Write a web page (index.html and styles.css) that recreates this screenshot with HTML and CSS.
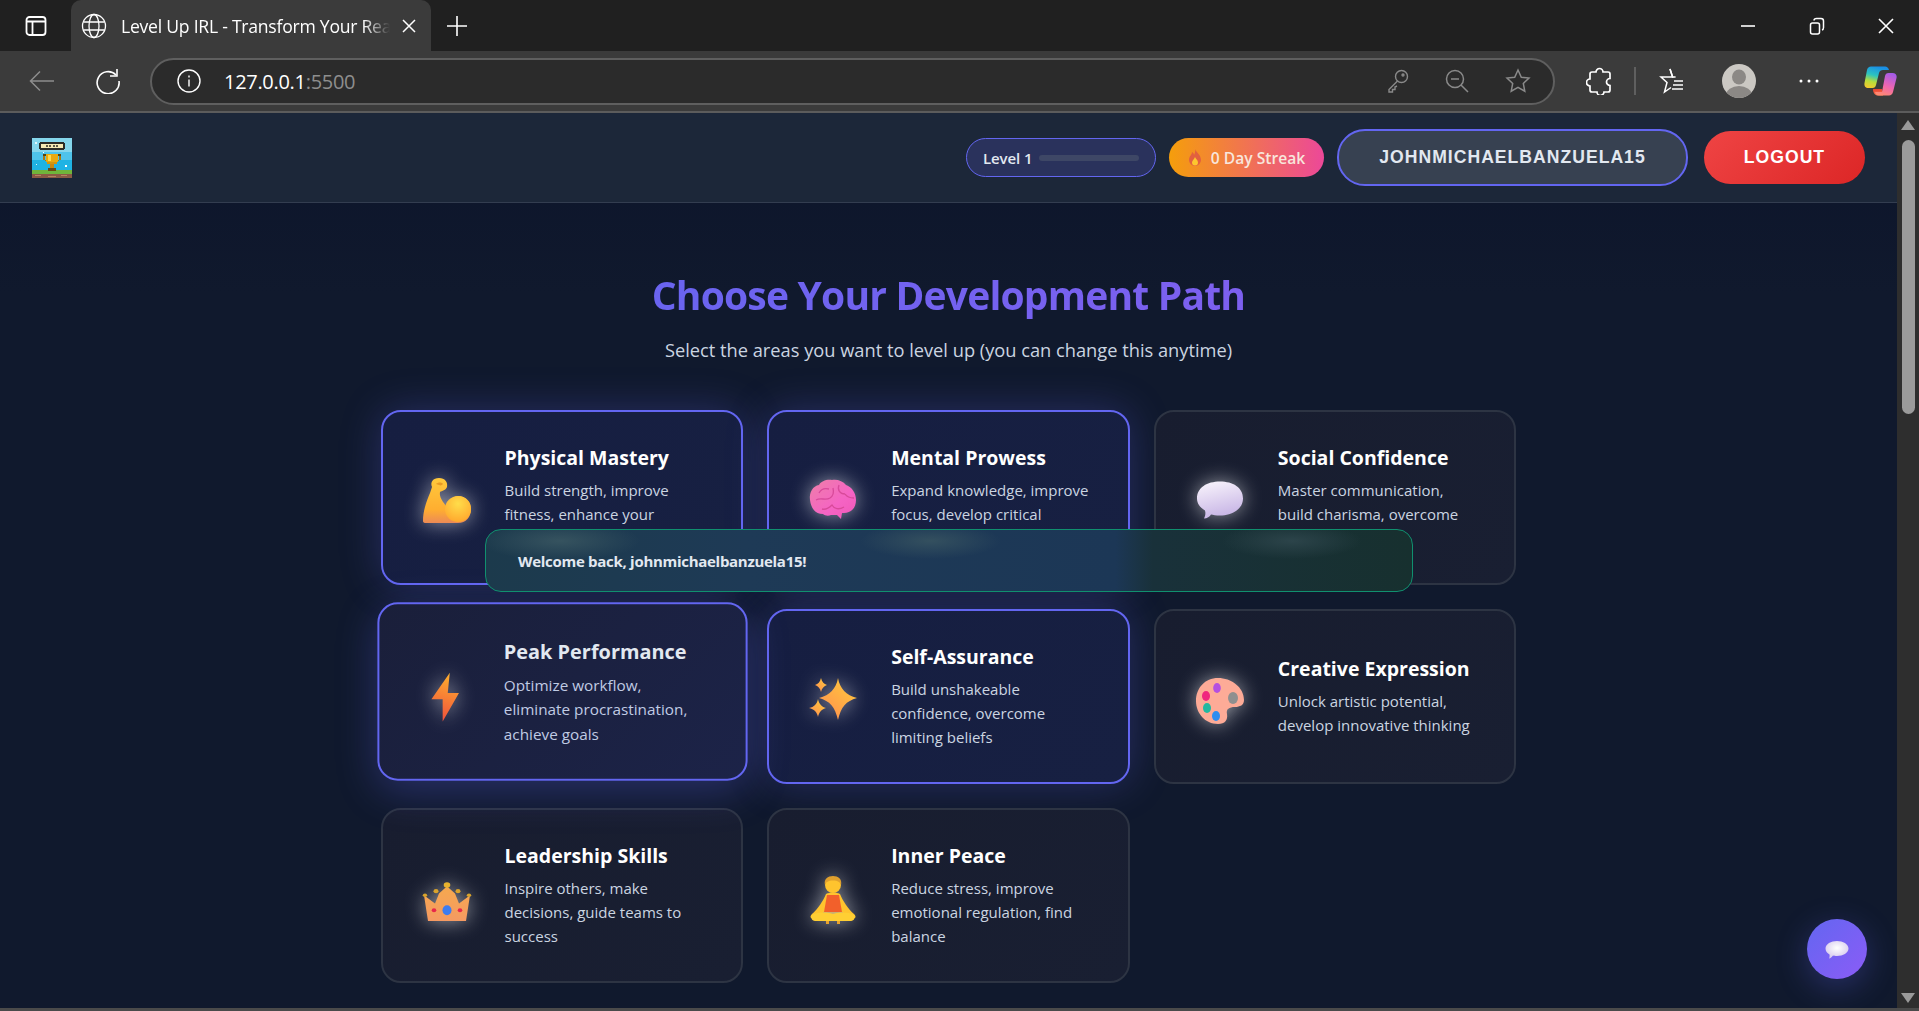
FILE: index.html
```html
<!DOCTYPE html>
<html lang="en">
<head>
  <meta charset="UTF-8">
  <meta name="viewport" content="width=device-width, initial-scale=1.0">
  <title>Level Up IRL - Transform Your Reality</title>
  <link rel="stylesheet" href="styles.css">
</head>
<body>
  <!-- browser frame -->
  <div class="tabstrip">
    <div class="tab-toggle">
      <svg width="22" height="22" viewBox="0 0 22 22" fill="none" stroke="#fff" stroke-width="1.8"><rect x="1.500" y="2" width="19" height="18" rx="3"/><path d="M1.500 6.500h19M7.500 6.500V20"/></svg>
    </div>
    <div class="tab">
      <svg class="tab-globe" width="26" height="26" viewBox="0 0 26 26" fill="none" stroke="#fff" stroke-width="1.3"><circle cx="13" cy="13" r="11.500"/><ellipse cx="13" cy="13" rx="5" ry="11.500"/><path d="M2.500 9h21M2.500 17h21"/></svg>
      <span class="tab-title">Level Up IRL - Transform Your Rea</span>
      <svg class="tab-close" width="14" height="14" viewBox="0 0 14 14" stroke="#fff" stroke-width="1.5"><path d="M1 1l12 12M13 1L1 13"/></svg>
    </div>
    <svg class="tab-new" width="22" height="22" viewBox="0 0 22 22" stroke="#fff" stroke-width="1.6"><path d="M11 1v20M1 11h20"/></svg>
    <div class="window-btns">
      <svg width="16" height="16" viewBox="0 0 16 16" stroke="#fff" stroke-width="1.6"><path d="M1 8h14"/></svg>
      <svg width="16" height="18" viewBox="0 0 16 18" fill="none" stroke="#fff" stroke-width="1.5"><rect x="1.500" y="6" width="9" height="11" rx="2"/><path d="M5 3.500Q5 1.500 7.500 1.500H12Q14.500 1.500 14.500 4V10.500Q14.500 12.500 13 13"/></svg>
      <svg width="16" height="16" viewBox="0 0 16 16" stroke="#fff" stroke-width="1.6"><path d="M1 1l14 14M15 1L1 15"/></svg>
    </div>
  </div>
  <div class="toolbar">
    <svg class="nav-back" width="26" height="22" viewBox="0 0 26 22" fill="none" stroke="#8d8d8d" stroke-width="1.5"><path d="M25 11H2M11 1.500L1.500 11 11 20.500"/></svg>
    <svg class="nav-reload" width="26" height="26" viewBox="0 0 26 26" fill="none" stroke="#fff" stroke-width="1.6"><path d="M21 7A11 11 0 1 0 24 13"/><path d="M22 1v7h-7"/></svg>
    <div class="address">
      <svg width="24" height="24" viewBox="0 0 24 24" fill="none" stroke="#fff" stroke-width="1.4"><circle cx="12" cy="12" r="11"/><path d="M12 10.500v7M12 6.500v2"/></svg>
      <div class="url">127.0.0.1<span>:5500</span></div>
      <div class="address-icons">
        <svg width="22" height="24" viewBox="0 0 22 24" fill="none" stroke="#8a8a8a" stroke-width="1.4"><circle cx="14.500" cy="7.500" r="6"/><path d="M10.500 12L2 20.500V23h3.500v-2.500H8V18l2-1"/><circle cx="16" cy="6" r="1"/></svg>
        <svg width="24" height="24" viewBox="0 0 24 24" fill="none" stroke="#8a8a8a" stroke-width="1.5"><circle cx="10" cy="10" r="8.500"/><path d="M6 10h8M16 16l7 7"/></svg>
        <svg width="26" height="26" viewBox="0 0 26 26" fill="none" stroke="#8a8a8a" stroke-width="1.5"><path d="M13 2l3.300 7.200 7.700.9-5.700 5.300 1.500 7.800-6.800-3.900-6.800 3.900 1.500-7.800L2 10.100l7.700-.9z"/></svg>
      </div>
    </div>
    <svg class="tool-ext" width="26" height="28" viewBox="0 0 26 28" fill="none" stroke="#fff" stroke-width="1.7"><path d="M10 5a3.500 3.500 0 1 1 7 0h5a2 2 0 0 1 2 2v4.500a3.500 3.500 0 1 0 0 7V23a2 2 0 0 1-2 2h-4a3.500 3.500 0 1 1-7 0H6a2 2 0 0 1-2-2v-4a3.500 3.500 0 1 1 0-7V7a2 2 0 0 1 2-2z"/></svg>
    <div class="tool-sep"></div>
    <svg class="tool-fav" width="26" height="28" viewBox="0 0 26 28" fill="none" stroke="#fff" stroke-width="1.500"><path d="M11 2l2.600 8H2l6 5.500L5.500 25l6.500-4.500"/><path d="M11 2l2.600 8h3M15 14h9M14 18h10M13 22h11"/></svg>
    <svg class="tool-avatar" width="34" height="34" viewBox="0 0 34 34"><clipPath id="av"><circle cx="17" cy="17" r="17"/></clipPath><g clip-path="url(#av)"><rect width="34" height="34" fill="#cbc8c3"/><ellipse cx="17" cy="13" rx="7" ry="7.500" fill="#8b8885"/><ellipse cx="17" cy="31" rx="13" ry="9" fill="#8b8885"/></g></svg>
    <svg class="tool-more" width="20" height="4" viewBox="0 0 20 4" fill="#fff"><circle cx="2" cy="2" r="1.500"/><circle cx="10" cy="2" r="1.500"/><circle cx="18" cy="2" r="1.500"/></svg>
    <svg class="tool-copilot" width="33" height="30" viewBox="0 0 33 30">
      <defs>
        <linearGradient id="cpA" x1="0.500" y1="0" x2="0.200" y2="1"><stop offset="0" stop-color="#1a8fe6"/><stop offset=".4" stop-color="#2cc4c0"/><stop offset=".7" stop-color="#b8dc3a"/><stop offset="1" stop-color="#f5c92e"/></linearGradient>
        <linearGradient id="cpB" x1="0.700" y1="0" x2="0.300" y2="1"><stop offset="0" stop-color="#a45be8"/><stop offset=".55" stop-color="#ee66b0"/><stop offset="1" stop-color="#ff8a70"/></linearGradient>
        <linearGradient id="cpC" x1="0" y1="0" x2="0" y2="1"><stop offset="0" stop-color="#e83f2e"/><stop offset="1" stop-color="#ff7a55"/></linearGradient>
      </defs>
      <path d="M7 .5C5 .5 3.500 2 3 4L.5 17c-.5 3 1 5 4 5h4c2 0 3-1 3.500-3L15 7c.5-2 2-3 4-3h6c-.5-2-2-3.500-4-3.500z" fill="url(#cpA)"/>
      <path d="M9 23c0 4 2 6.500 5 6.500h5l-1-6.500z" fill="url(#cpC)"/>
      <path d="M18 26H11c.5 2 2 3.500 4 3.500h10c2 0 3.500-1.500 4-3.500l3.500-14c.7-3-1-5-4-5h-4c-2 0-3 1-3.500 3z" fill="url(#cpB)"/>
    </svg>
  </div>

  <div class="viewport">
    <div class="page">
      <header class="topbar">
        <svg class="logo" width="40" height="40" viewBox="0 0 40 40" shape-rendering="crispEdges">
          <rect width="40" height="14" fill="#85d6ec"/>
          <rect y="14" width="40" height="8" fill="#4fc3ea"/>
          <rect y="22" width="40" height="10" fill="#1fb3e4"/>
          <rect y="32" width="40" height="4" fill="#6fb53b"/>
          <rect y="36" width="40" height="4" fill="#8a5a44"/>
          <rect y="37" x="3" width="6" height="1" fill="#b5835f"/><rect y="38" x="16" width="8" height="1" fill="#b5835f"/><rect y="37" x="29" width="6" height="1" fill="#b5835f"/>
          <rect x="8" y="4" width="24" height="8" fill="#2b2b26"/>
          <rect x="7" y="5" width="26" height="6" fill="#2b2b26"/>
          <rect x="9" y="6" width="22" height="4" fill="#f5e9b4"/>
          <rect x="14" y="7" width="2" height="2" fill="#5f5a48"/><rect x="17" y="7" width="2" height="2" fill="#5f5a48"/><rect x="21" y="7" width="2" height="2" fill="#5f5a48"/><rect x="24" y="7" width="2" height="2" fill="#5f5a48"/>
          <rect x="11" y="16" width="18" height="2" fill="#5a4410"/>
          <rect x="11" y="18" width="2" height="4" fill="#a87a10"/><rect x="27" y="18" width="2" height="4" fill="#a87a10"/>
          <rect x="13" y="22" width="2" height="1" fill="#a87a10"/><rect x="25" y="22" width="2" height="1" fill="#a87a10"/>
          <rect x="14" y="16" width="12" height="8" fill="#e8a90f"/>
          <rect x="15" y="24" width="10" height="2" fill="#d19510"/>
          <rect x="16" y="17" width="3" height="6" fill="#ffd84a"/>
          <rect x="18" y="26" width="4" height="4" fill="#c8880f"/>
          <rect x="16" y="30" width="8" height="3" fill="#6b4a14"/>
          <rect x="33" y="27" width="2" height="2" fill="#fff"/><rect x="3" y="4" width="2" height="2" fill="#dff5fb"/><rect x="11" y="14" width="1" height="1" fill="#fff"/><rect x="4" y="26" width="1" height="1" fill="#dff5fb"/>
        </svg>
        <div class="topbar-right">
          <div class="level-pill">
            <span>Level 1</span>
            <div class="level-track"></div>
          </div>
          <div class="streak-pill">
            <svg width="14" height="18" viewBox="0 0 14 18"><path d="M7 0c1 3 6 6 6 11a6 6 0 0 1-12 0C1 7 4 6 4 3c1 .5 2 1.500 2 3 1-1.500 1.500-4 1-6z" fill="#e2603f"/><path d="M7 8c.5 1.500 3 3 3 5.500a3 3 0 0 1-6 0C4 11.500 6 10.500 7 8z" fill="#fdc72e"/></svg>
            <span>0 Day Streak</span>
          </div>
          <button class="user-btn">JOHNMICHAELBANZUELA15</button>
          <button class="logout-btn">LOGOUT</button>
        </div>
      </header>

      <main class="paths">
        <h1 class="paths-title">Choose Your Development Path</h1>
        <p class="paths-sub">Select the areas you want to level up (you can change this anytime)</p>

        <div class="path-grid">
          <div class="path-card selected">
            <div class="path-icon">
              <svg width="48" height="48" viewBox="0 0 48 48">
                <defs><linearGradient id="g1" x1="0" y1="0" x2="0" y2="1"><stop offset="0" stop-color="#ffc93c"/><stop offset=".7" stop-color="#ffae30"/><stop offset="1" stop-color="#ec8a56"/></linearGradient>
                <radialGradient id="g1b" cx=".5" cy=".3" r=".7"><stop offset="0" stop-color="#ffdd4a"/><stop offset="1" stop-color="#ffa92e"/></radialGradient></defs>
                <path d="M0 43C0 34 3 24 7 15L9 9C7 4 10 0 16 0c6 0 9 4 8 9-1 3-5 4-7 5-1 5 3 10 7 15 3-7 7-11 11-11 8 0 13 6 13 13 0 8-5 14-13 14H3c-2 0-3-.500-3-2z" fill="url(#g1)"/>
                <circle cx="35" cy="31" r="13" fill="url(#g1b)"/>
                <path d="M13 6c2-2 6-2 7 0-1 1-2 2-4 1z" fill="#e89a25"/>
              </svg>
            </div>
            <div class="path-text">
              <h3>Physical Mastery</h3>
              <p>Build strength, improve<br>fitness, enhance your<br>overall health</p>
            </div>
          </div>

          <div class="path-card selected">
            <div class="path-icon">
              <svg width="48" height="48" viewBox="0 0 48 48">
                <defs><linearGradient id="g2" x1="0" y1="0" x2="1" y2="1"><stop offset="0" stop-color="#ee7fa8"/><stop offset=".6" stop-color="#f564c4"/><stop offset="1" stop-color="#f058b8"/></linearGradient></defs>
                <path d="M1 22C0 14 4 8 10 7c2-4 8-6 13-5 5-1 11 1 14 5 6 2 10 8 10 15 0 8-5 13-12 13h-2l-1 6-4-4H22c-2 1-6 1-8-1C6 36 2 30 1 22z" fill="url(#g2)"/>
                <path d="M7 22c5-3 9 1 14-2 3-2 4-6 3-10M30 7c-2 5 1 9 6 9M13 31c4 1 7-1 10-4 2 4 7 5 12 2M36 16c2 3 5 4 9 4M20 11c-4-1-8 0-10 4" fill="none" stroke="#d84a9a" stroke-width="1.300"/>
              </svg>
            </div>
            <div class="path-text">
              <h3>Mental Prowess</h3>
              <p>Expand knowledge, improve<br>focus, develop critical<br>thinking skills</p>
            </div>
          </div>

          <div class="path-card">
            <div class="path-icon">
              <svg width="48" height="48" viewBox="0 0 48 48">
                <defs><linearGradient id="g3" x1="0" y1="0" x2="0.300" y2="1"><stop offset="0" stop-color="#fbf7fd"/><stop offset="1" stop-color="#c9b7e6"/></linearGradient></defs>
                <path d="M24 3.500C37 3.500 47 9.500 47 20.500c0 10-10 17-23 17-4 0-7-.500-9-1-1 2-4 4-7 4 1-2 2-5 1-8C4 29.500 1 25.500 1 20.500 1 9.500 11 3.500 24 3.500z" fill="url(#g3)"/>
              </svg>
            </div>
            <div class="path-text">
              <h3>Social Confidence</h3>
              <p>Master communication,<br>build charisma, overcome<br>social anxiety</p>
            </div>
          </div>

          <div class="path-card selected hovered">
            <div class="path-icon">
              <svg width="48" height="48" viewBox="0 0 48 48">
                <defs><linearGradient id="g4" x1=".6" y1="0" x2=".4" y2="1"><stop offset="0" stop-color="#ffb02e"/><stop offset="1" stop-color="#f0503c"/></linearGradient></defs>
                <path d="M29 0L11 26H22L22 48L38 20H27z" fill="url(#g4)"/>
              </svg>
            </div>
            <div class="path-text">
              <h3>Peak Performance</h3>
              <p>Optimize workflow,<br>eliminate procrastination,<br>achieve goals</p>
            </div>
          </div>

          <div class="path-card selected">
            <div class="path-icon">
              <svg width="48" height="48" viewBox="0 0 48 48">
                <defs><linearGradient id="g5" x1=".8" y1="0" x2="0" y2="1"><stop offset="0" stop-color="#ffc83d"/><stop offset="1" stop-color="#ff8a50"/></linearGradient></defs>
                <path d="M29 1c2 11 8 17 19 20-11 3-16 9-19 22-3-13-8-19-19-22 11-3 17-9 19-20z" fill="url(#g5)"/>
                <path d="M12 1c1 4 3 6 6 7-3 1-5 3-6 7-1-4-3-6-6-7 3-1 5-3 6-7z" fill="url(#g5)"/>
                <path d="M9 22c1 5 4 8 8 9-4 1-7 4-8 9-1-5-4-8-9-9 5-1 8-4 9-9z" fill="url(#g5)"/>
              </svg>
            </div>
            <div class="path-text">
              <h3>Self-Assurance</h3>
              <p>Build unshakeable<br>confidence, overcome<br>limiting beliefs</p>
            </div>
          </div>

          <div class="path-card">
            <div class="path-icon">
              <svg width="48" height="48" viewBox="0 0 48 48">
                <path d="M22 1C35 1 48 10 48 23c0 5-4 7-9 7-6 0-9 2-8 7 1 6-2 10-9 10C9 47 0 36 0 24 0 11 9 1 22 1z" fill="#fdab97"/>
                <ellipse cx="37" cy="21" rx="5" ry="6" fill="#8f8f8f"/>
                <ellipse cx="21" cy="11" rx="3.800" ry="5" fill="#b54fe0"/>
                <ellipse cx="10" cy="19" rx="4" ry="5" fill="#f0267e"/>
                <ellipse cx="11" cy="31" rx="4" ry="5" fill="#22b8a0"/>
                <ellipse cx="20" cy="39" rx="4" ry="5" fill="#2e8df0"/>
              </svg>
            </div>
            <div class="path-text">
              <h3>Creative Expression</h3>
              <p>Unlock artistic potential,<br>develop innovative thinking</p>
            </div>
          </div>

          <div class="path-card">
            <div class="path-icon">
              <svg width="48" height="48" viewBox="0 0 48 48">
                <defs><linearGradient id="g7" x1="0" y1="0" x2="0" y2="1"><stop offset="0" stop-color="#f5a94e"/><stop offset="1" stop-color="#f59a62"/></linearGradient></defs>
                <g transform="translate(0 6) scale(1 .83)">
                  <path d="M5 47L1 16l11 10 4-12 8-9 8 9 4 12 11-10-4 31z" fill="url(#g7)"/>
                  <ellipse cx="24" cy="34" rx="4.500" ry="6" fill="#3e7cf0"/>
                  <circle cx="11" cy="34" r="2.300" fill="#e8274b"/><circle cx="37" cy="34" r="2.300" fill="#e8274b"/>
                  <circle cx="24" cy="3.500" r="3.300" fill="#e8b32e"/><circle cx="13" cy="11" r="2.500" fill="#d9a32c"/><circle cx="35" cy="11" r="2.500" fill="#d9a32c"/><circle cx="2" cy="16" r="2.200" fill="#d9a32c"/><circle cx="46" cy="16" r="2.200" fill="#d9a32c"/>
                </g>
              </svg>
            </div>
            <div class="path-text">
              <h3>Leadership Skills</h3>
              <p>Inspire others, make<br>decisions, guide teams to<br>success</p>
            </div>
          </div>

          <div class="path-card">
            <div class="path-icon">
              <svg width="48" height="48" viewBox="0 0 48 48">
                <path d="M17 18c-3 7-8 15-14 20-2 2-2 4 0 4h42c2 0 2-2 0-4-6-5-11-13-14-20-4-2-10-2-14 0z" fill="#ffc42e"/>
                <path d="M18 19h12l3 17H15z" fill="#f2602b"/>
                <rect x="14" y="36" width="20" height="3" fill="#a3a3a3" opacity=".6"/>
                <path d="M3 39c6-3 13-3 21-1 8-2 15-2 21 1 2 2 0 6-3 6H6c-3 0-5-4-3-6z" fill="#ffcf33"/>
                <circle cx="24" cy="9" r="8" fill="#ffc42e"/>
                <path d="M16 9C14.500 3 19 0 24 0c5 0 9.500 3 8 9-1-3-3-4.500-8-4.500S17 6 16 9z" fill="#e0a02e"/>
                <path d="M17 45h3v3h-3zM28 45h3v3h-3z" fill="#e8a32e"/>
              </svg>
            </div>
            <div class="path-text">
              <h3>Inner Peace</h3>
              <p>Reduce stress, improve<br>emotional regulation, find<br>balance</p>
            </div>
          </div>
        </div>
      </main>

      <div class="toast">Welcome back, johnmichaelbanzuela15!</div>

      <button class="chat-fab" aria-label="Chat">
        <svg width="24" height="19" viewBox="0 0 24 19">
          <defs><radialGradient id="g9" cx=".5" cy=".4" r=".7"><stop offset="0" stop-color="#fff"/><stop offset="1" stop-color="#cfc0ea"/></radialGradient></defs>
          <path d="M12 1c6 0 11.500 3 11.500 7.500S18 16 12 16c-2 0-3-.2-4-.5C7 17 5.500 18.500 4 18.500c.5-1 .8-2.500.5-4C2 13 .5 11 .5 8.500.5 4 6 1 12 1z" fill="url(#g9)"/>
        </svg>
      </button>
    </div>

    <div class="scrollbar">
      <div class="scroll-up"></div>
      <div class="scroll-thumb"></div>
      <div class="scroll-down"></div>
    </div>
  </div>
  <div class="frame-bottom"></div>
</body>
</html>
```
FILE: styles.css
```css
* {
  box-sizing: border-box;
}

html, body {
  height: 100%;
}

body {
  margin: 0;
  display: flex;
  flex-direction: column;
  overflow: hidden;
  font-family: "Open Sans", "Noto Sans", sans-serif;
  background-color: #202020;
  color: #fff;
}

/* browser frame */
.tabstrip {
  height: 51px;
  flex-shrink: 0;
  display: flex;
  align-items: center;
  background-color: #202020;
}

.tab-toggle {
  width: 71px;
  display: flex;
  justify-content: center;
}

.tab {
  width: 360px;
  height: 51px;
  display: flex;
  align-items: center;
  background-color: #3b3b3b;
  border-radius: 10px 10px 0 0;
  padding: 0 15px 0 10px;
}

.tab svg {
  flex-shrink: 0;
}

.tab-title {
  flex: 1;
  min-width: 0;
  margin-left: 14px;
  font-size: 17.6px;
  white-space: nowrap;
  letter-spacing: -0.25px;
  -webkit-mask-image: linear-gradient(to right, #000 90%, transparent 100%);
  mask-image: linear-gradient(to right, #000 90%, transparent 100%);
}

.tab-close {
  margin-left: 12px;
}

.tab-new {
  margin-left: 15px;
}

.window-btns {
  margin-left: auto;
  display: flex;
  align-items: center;
  gap: 53px;
  padding-right: 25px;
}

.toolbar {
  height: 62px;
  flex-shrink: 0;
  display: flex;
  align-items: center;
  background-color: #3b3b3b;
  border-bottom: 2px solid #5c5c5c;
}

.nav-back {
  margin-left: 29px;
}

.nav-reload {
  margin-left: 40px;
}

.address {
  height: 47px;
  width: 1405px;
  margin-left: 29px;
  display: flex;
  align-items: center;
  background-color: #2b2b2b;
  border: 2px solid #5f5f5f;
  border-radius: 24px;
  padding: 0 22px 0 25px;
}

.url {
  margin-left: 23px;
  font-size: 20px;
  letter-spacing: -0.3px;
}

.url span {
  color: #8e8e8e;
}

.address-icons {
  margin-left: auto;
  display: flex;
  align-items: center;
  gap: 36px;
}

.tool-ext {
  margin-left: 31px;
}

.tool-sep {
  width: 2px;
  height: 28px;
  margin-left: 22px;
  background-color: #5f5f5f;
}

.tool-fav {
  margin-left: 23px;
}

.tool-avatar {
  margin-left: 37px;
}

.tool-more {
  margin-left: 43px;
}

.tool-copilot {
  margin-left: 45px;
}

.viewport {
  flex: 1;
  min-height: 0;
  display: flex;
}

.frame-bottom {
  height: 3px;
  flex-shrink: 0;
  background-color: #4a4a4a;
}

.scrollbar {
  width: 22px;
  flex-shrink: 0;
  display: flex;
  flex-direction: column;
  align-items: center;
  background-color: #2e2e2e;
  padding: 7px 0 5px;
}

.scroll-up, .scroll-down {
  width: 0;
  height: 0;
  border-left: 7px solid transparent;
  border-right: 7px solid transparent;
}

.scroll-up {
  border-bottom: 10px solid #9a9a9a;
}

.scroll-down {
  margin-top: auto;
  border-top: 10px solid #9a9a9a;
}

.scroll-thumb {
  width: 13px;
  height: 274px;
  margin-top: 10px;
  border-radius: 7px;
  background-color: #9b9b9b;
}

/* page */
.page {
  flex: 1;
  min-width: 0;
  position: relative;
  overflow: hidden;
  background: linear-gradient(180deg, #0c142b 0, #10192d 180px);
}

.topbar {
  height: 90px;
  display: flex;
  align-items: center;
  justify-content: space-between;
  padding: 0 32px;
  background-color: #1c2739;
  border-bottom: 1px solid #333d50;
}

.logo {
  display: block;
}

.topbar-right {
  display: flex;
  align-items: center;
  gap: 13px;
}

.level-pill {
  width: 190px;
  height: 39px;
  display: flex;
  align-items: center;
  gap: 7px;
  padding: 0 16px;
  background-color: #2a325c;
  border: 1px solid #6366f1;
  border-radius: 20px;
  font-size: 15px;
  font-weight: 600;
  white-space: nowrap;
  letter-spacing: -0.1px;
  color: #e2e8f0;
}

.level-track {
  width: 100px;
  height: 6px;
  flex-shrink: 0;
  border-radius: 3px;
  background-color: #3e4766;
}

.streak-pill {
  width: 155px;
  height: 39px;
  display: flex;
  align-items: center;
  justify-content: center;
  gap: 9px;
  background: linear-gradient(90deg, #f59e0b, #ec4899);
  border-radius: 20px;
  font-size: 15.6px;
  font-weight: 600;
  white-space: nowrap;
  color: #f8e6dc;
}

.user-btn, .logout-btn {
  font-family: "Liberation Sans", Arial, sans-serif;
  font-size: 17.6px;
  font-weight: 700;
  letter-spacing: 1px;
  border-radius: 28px;
}

.user-btn {
  width: 351px;
  height: 57px;
  background-color: #374151;
  border: 2px solid #6366f1;
  color: #e2e8f0;
}

.logout-btn {
  width: 161px;
  height: 53px;
  margin-left: 3px;
  border: none;
  color: #fff;
  background: linear-gradient(135deg, #ef4444, #dc2626);
}

.paths {
  padding-top: 66px;
}

.paths-title {
  width: max-content;
  margin: 0 auto;
  font-size: 39px;
  line-height: 52px;
  font-weight: 700;
  letter-spacing: -0.8px;
  color: #6f62ec;
  background: linear-gradient(90deg, #6a64f0, #7d60ef);
  -webkit-background-clip: text;
  background-clip: text;
  -webkit-text-fill-color: transparent;
}

.paths-sub {
  margin: 16px 0 0;
  text-align: center;
  font-size: 18.25px;
  line-height: 26px;
  color: #cbd5e1;
}

.path-grid {
  width: 1136px;
  margin: 46.5px auto 0;
  display: grid;
  grid-template-columns: repeat(3, 1fr);
  gap: 24px;
}

.path-card {
  height: 175px;
  display: flex;
  align-items: center;
  gap: 26px;
  padding: 0 32px;
  border: 2px solid #2d3443;
  border-radius: 20px;
  background: linear-gradient(135deg, #181d2f, #191f32);
}

.path-card.selected {
  border-color: #6366f1;
  background: linear-gradient(135deg, #161e41, #172042);
  box-shadow: 0 0 40px rgba(99, 102, 241, 0.28);
}

.path-card.hovered {
  transform: translateY(-5px) scale(1.02);
  background: linear-gradient(135deg, #1a1f3a, #1c2348);
  box-shadow: 0 10px 40px rgba(99, 102, 241, 0.3);
}

.path-icon {
  width: 64px;
  flex-shrink: 0;
  display: flex;
  justify-content: center;
  padding-top: 10px;
}

.path-icon svg {
  display: block;
  overflow: visible;
  filter: drop-shadow(0 0 10px rgba(255, 255, 255, 0.55));
}

.path-text h3 {
  margin: 0 0 7px;
  font-size: 19.5px;
  line-height: 27px;
  font-weight: 700;
  white-space: nowrap;
  color: #fff;
}

.path-text p {
  margin: 0;
  font-size: 15px;
  line-height: 24px;
  white-space: nowrap;
  color: #cbd5e1;
}

.path-card.hovered h3 {
  color: #e2e8f0;
}

.path-card.hovered p {
  color: #c0cbe4;
}

/* overlays */
.toast {
  position: absolute;
  left: 485px;
  top: 416px;
  width: 928px;
  height: 63px;
  display: flex;
  align-items: center;
  padding: 0 32px;
  border: 1px solid #10906f;
  border-radius: 16px;
  background:
    radial-gradient(80px 20px at 8% 18%, #36535f, transparent),
    radial-gradient(70px 18px at 48% 18%, #34505f, transparent),
    radial-gradient(70px 18px at 87% 18%, #2c444a, transparent),
    linear-gradient(90deg, #1c3a4c 0, #1e3a56 28%, #1c3756 68%, #19313a 72%, #17302f 100%);
  font-size: 15px;
  font-weight: 700;
  letter-spacing: -0.29px;
  color: #e2e8f0;
}

.chat-fab {
  position: absolute;
  left: 1807px;
  top: 806px;
  width: 60px;
  height: 60px;
  display: flex;
  align-items: center;
  justify-content: center;
  border: none;
  border-radius: 50%;
  background: linear-gradient(135deg, #6366f1, #8b5cf6);
  box-shadow: 0 8px 32px rgba(99, 102, 241, 0.3);
}
```
